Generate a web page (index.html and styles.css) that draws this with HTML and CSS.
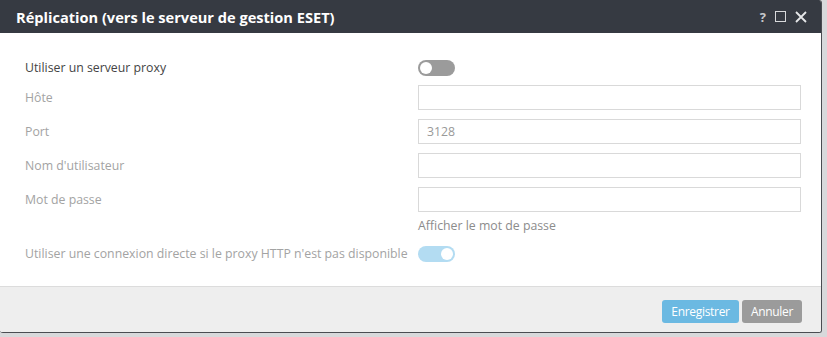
FILE: index.html
```html
<!DOCTYPE html>
<html lang="fr">
  <head>
    <meta charset="UTF-8" />
    <meta name="viewport" content="width=device-width, initial-scale=1.0" />
    <title>Réplication</title>
    <link rel="stylesheet" href="styles.css">
  </head>
  <body>
    <div class="dialog">
      <header>
        <div class="title">Réplication (vers le serveur de gestion ESET)</div>
        <div class="tools">
          <span class="help">?</span>
          <span class="max"></span>
          <svg class="close" width="12" height="12" viewBox="0 0 12 12">
            <path d="M1 1 L11 11 M11 1 L1 11" stroke="#e6e7e9" stroke-width="1.8" />
          </svg>
        </div>
      </header>
      <div class="content">
        <div class="row">
          <label class="main">Utiliser un serveur proxy</label>
          <div><span class="toggle off"><span class="knob"></span></span></div>
        </div>
        <div class="row">
          <label>Hôte</label>
          <input type="text" />
        </div>
        <div class="row">
          <label>Port</label>
          <input type="text" value="3128" />
        </div>
        <div class="row">
          <label>Nom d'utilisateur</label>
          <input type="text" />
        </div>
        <div class="row">
          <label>Mot de passe</label>
          <input type="password" />
        </div>
        <div class="row show">
          <span></span>
          <span class="link">Afficher le mot de passe</span>
        </div>
        <div class="row">
          <label>Utiliser une connexion directe si le proxy HTTP n'est pas disponible</label>
          <div><span class="toggle on"><span class="knob"></span></span></div>
        </div>
      </div>
      <footer>
        <button class="save">Enregistrer</button>
        <button class="cancel">Annuler</button>
      </footer>
    </div>
  </body>
</html>
```

FILE: styles.css
```css
body {
  margin: 0;
  padding: 0;
  background-color: #d8d9db;
  font-family: "Open Sans", "Noto Sans", sans-serif;
  font-size: 12.3px;
}
.dialog {
  width: 822px;
  height: 333px;
  display: flex;
  flex-direction: column;
  background-color: white;
  border-right: 1px solid #4a4d52;
  border-bottom: 1px solid #4a4d52;
  border-radius: 0 3px 3px 3px;
  overflow: hidden;
  box-sizing: border-box;
}
header {
  height: 33px;
  flex: none;
  display: flex;
  justify-content: space-between;
  align-items: center;
  background-color: #363a42;
  color: white;
  padding: 0 16px;
}
.title {
  font-size: 14.6px;
  font-weight: bold;
}
.tools {
  display: flex;
  align-items: center;
  gap: 9px;
  margin-right: -2px;
}
.help {
  color: #c6c8cb;
  font-size: 13px;
  font-weight: bold;
}
.max {
  width: 9px;
  height: 9px;
  border: 1.5px solid #d8d9db;
}
.content {
  flex: 1;
  padding: 26px 20px 0 25px;
}
.row {
  display: grid;
  grid-template-columns: 393px 1fr;
  align-items: center;
  margin-bottom: 9px;
}
.row label {
  color: #a3a3a3;
}
.row label.main {
  color: #444;
}
.row input {
  height: 25px;
  border: 1px solid #d9d9d9;
  box-sizing: border-box;
  padding: 0 8px;
  font-family: inherit;
  font-size: 12.3px;
  color: #999;
  outline: none;
}
.row.show {
  margin-top: -4px;
  margin-bottom: 11px;
}
.link {
  color: #8c8c8c;
}
.toggle {
  display: flex;
  align-items: center;
  width: 37px;
  height: 16px;
  border-radius: 8px;
  padding: 0 2px;
  box-sizing: border-box;
}
.toggle .knob {
  width: 12px;
  height: 12px;
  border-radius: 50%;
  background-color: white;
}
.toggle.off {
  background-color: #9b9b9b;
}
.toggle.on {
  background-color: #b3dcf2;
  justify-content: flex-end;
}
footer {
  height: 46px;
  flex: none;
  display: flex;
  justify-content: flex-end;
  align-items: flex-start;
  gap: 3px;
  padding: 13px 19px 0 0;
  box-sizing: border-box;
  background-color: #eeeeee;
  border-top: 1px solid #dcdcdc;
}
footer button {
  height: 23px;
  border: none;
  border-radius: 3px;
  color: white;
  font-family: inherit;
  font-size: 12px;
  letter-spacing: -0.3px;
  padding: 0;
}
.save {
  width: 77px;
  background-color: #6bb9e2;
}
.cancel {
  width: 60px;
  background-color: #9b9b9b;
}
```
